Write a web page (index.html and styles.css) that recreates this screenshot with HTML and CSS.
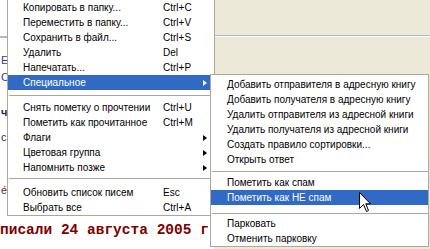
FILE: index.html
```html
<!DOCTYPE html>
<html lang="ru">
<head>
  <meta charset="UTF-8" />
  <title>Специальное — меню</title>
  <link rel="stylesheet" href="styles.css">
</head>
<body>
  <div class="screen">
    <div class="pane-left">
      <span class="peek-rule"></span>
      <span class="peek p1">Е</span>
      <span class="peek p2">С</span>
      <span class="peek p3">ч</span>
      <span class="peek p4">с</span>
      <span class="peek p5">é</span>
      <p class="quote">писали 24 августа 2005 г</p>
    </div>
    <div class="pane-right">
      <div class="toolbar"></div>
    </div>
  </div>

  <div class="menu menu-main">
    <div class="item"><span class="label">Копировать в папку...</span><span class="key">Ctrl+C</span></div>
    <div class="item"><span class="label">Переместить в папку...</span><span class="key">Ctrl+V</span></div>
    <div class="item"><span class="label">Сохранить в файл...</span><span class="key">Ctrl+S</span></div>
    <div class="item"><span class="label">Удалить</span><span class="key">Del</span></div>
    <div class="item"><span class="label">Напечатать...</span><span class="key">Ctrl+P</span></div>
    <div class="item active"><span class="label">Специальное</span><span class="arrow"></span></div>
    <div class="sep"></div>
    <div class="item"><span class="label">Снять пометку о прочтении</span><span class="key">Ctrl+U</span></div>
    <div class="item"><span class="label">Пометить как прочитанное</span><span class="key">Ctrl+M</span></div>
    <div class="item"><span class="label">Флаги</span><span class="arrow"></span></div>
    <div class="item"><span class="label">Цветовая группа</span><span class="arrow"></span></div>
    <div class="item"><span class="label">Напомнить позже</span><span class="arrow"></span></div>
    <div class="sep sep-low"></div>
    <div class="item"><span class="label">Обновить список писем</span><span class="key">Esc</span></div>
    <div class="item"><span class="label">Выбрать все</span><span class="key">Ctrl+A</span></div>
  </div>

  <div class="menu menu-sub">
    <div class="item">Добавить отправителя в адресную книгу</div>
    <div class="item">Добавить получателя в адресную книгу</div>
    <div class="item">Удалить отправителя из адресной книги</div>
    <div class="item">Удалить получателя из адресной книги</div>
    <div class="item">Создать правило сортировки...</div>
    <div class="item">Открыть ответ</div>
    <div class="sep sep-short"></div>
    <div class="item">Пометить как спам</div>
    <div class="item active">Пометить как НЕ спам</div>
    <div class="sep sep-tall"></div>
    <div class="item">Парковать</div>
    <div class="item">Отменить парковку</div>
  </div>

  <svg class="cursor" width="13" height="21" viewBox="0 0 13 21">
    <path d="M0.5 0.5 L0.5 16.5 L4.5 12.5 L7.5 19.5 L9.5 18.5 L6.8 11.8 L11.5 11.8 Z" fill="#fff" stroke="#000" stroke-width="1" stroke-linejoin="miter"/>
  </svg>
</body>
</html>
```

FILE: styles.css
```css
body { margin: 0; width: 430px; height: 249px; overflow: hidden; position: relative; font-family: "Liberation Sans", Arial, sans-serif; font-size: 10px; color: #000; }

.screen { display: flex; height: 249px; }
.pane-left { width: 214px; background: #fff; display: flex; flex-direction: column; white-space: nowrap; }
.pane-right { flex: 1; background: #ece9d8; }
.toolbar { height: 35px; border-bottom: 1px solid #aab8c8; box-shadow: 0 1px 0 #fff; }

/* bits of the message list that peek out left of the menu */
.peek-rule { display: block; width: 8px; height: 2px; margin-top: 36px; background: #b8b8b8; }
.peek { display: block; height: 14px; line-height: 14px; padding-left: 1px; font-size: 11px; }
.p1 { margin-top: 15px; color: #2a3f96; }
.p2 { margin-top: 3px; color: #2a3f96; }
.p3 { margin-top: 21px; color: #1c2770; font-weight: bold; }
.p4 { margin-top: 11px; color: #1c2770; }
.p5 { margin-top: 39px; color: #8b2020; }
.quote { margin: 25px 0 0 0; font-family: "Liberation Mono", "Courier New", monospace; font-weight: bold; font-size: 14.5px; line-height: 16px; color: #800000; }

/* popup menus */
.menu { position: absolute; background: #fff; border: 1px solid #aca899; white-space: nowrap; }
.menu-main { left: 7px; top: -4px; width: 202px; padding: 3px 4px 0 0; }
.menu-sub { left: 210px; top: 74px; width: 217px; padding: 2px 0 0 0; }

.item { display: flex; align-items: center; height: 15px; padding-left: 15px; }
.menu-sub .item { padding-left: 16px; }
.item .label { width: 140px; }
.item .key { flex: 1; }
.item .arrow { margin-left: auto; margin-right: 3px; width: 0; height: 0; border-style: solid; border-color: transparent transparent transparent #000; border-width: 3.5px 0 3.5px 4px; }
.item.active { background: #316ac5; color: #fff; }
.item.active .arrow { border-left-color: #fff; }

.sep { height: 10px; display: flex; align-items: center; }
.sep::before { content: ""; flex: 1; height: 1px; margin-left: 1px; background: #aca899; }
.sep-low { align-items: flex-start; padding-top: 3px; box-sizing: border-box; }
.sep-short { height: 8px; }
.sep-tall { height: 11px; align-items: flex-start; padding-top: 8px; box-sizing: border-box; }

.cursor { position: absolute; left: 359px; top: 192px; }
```
